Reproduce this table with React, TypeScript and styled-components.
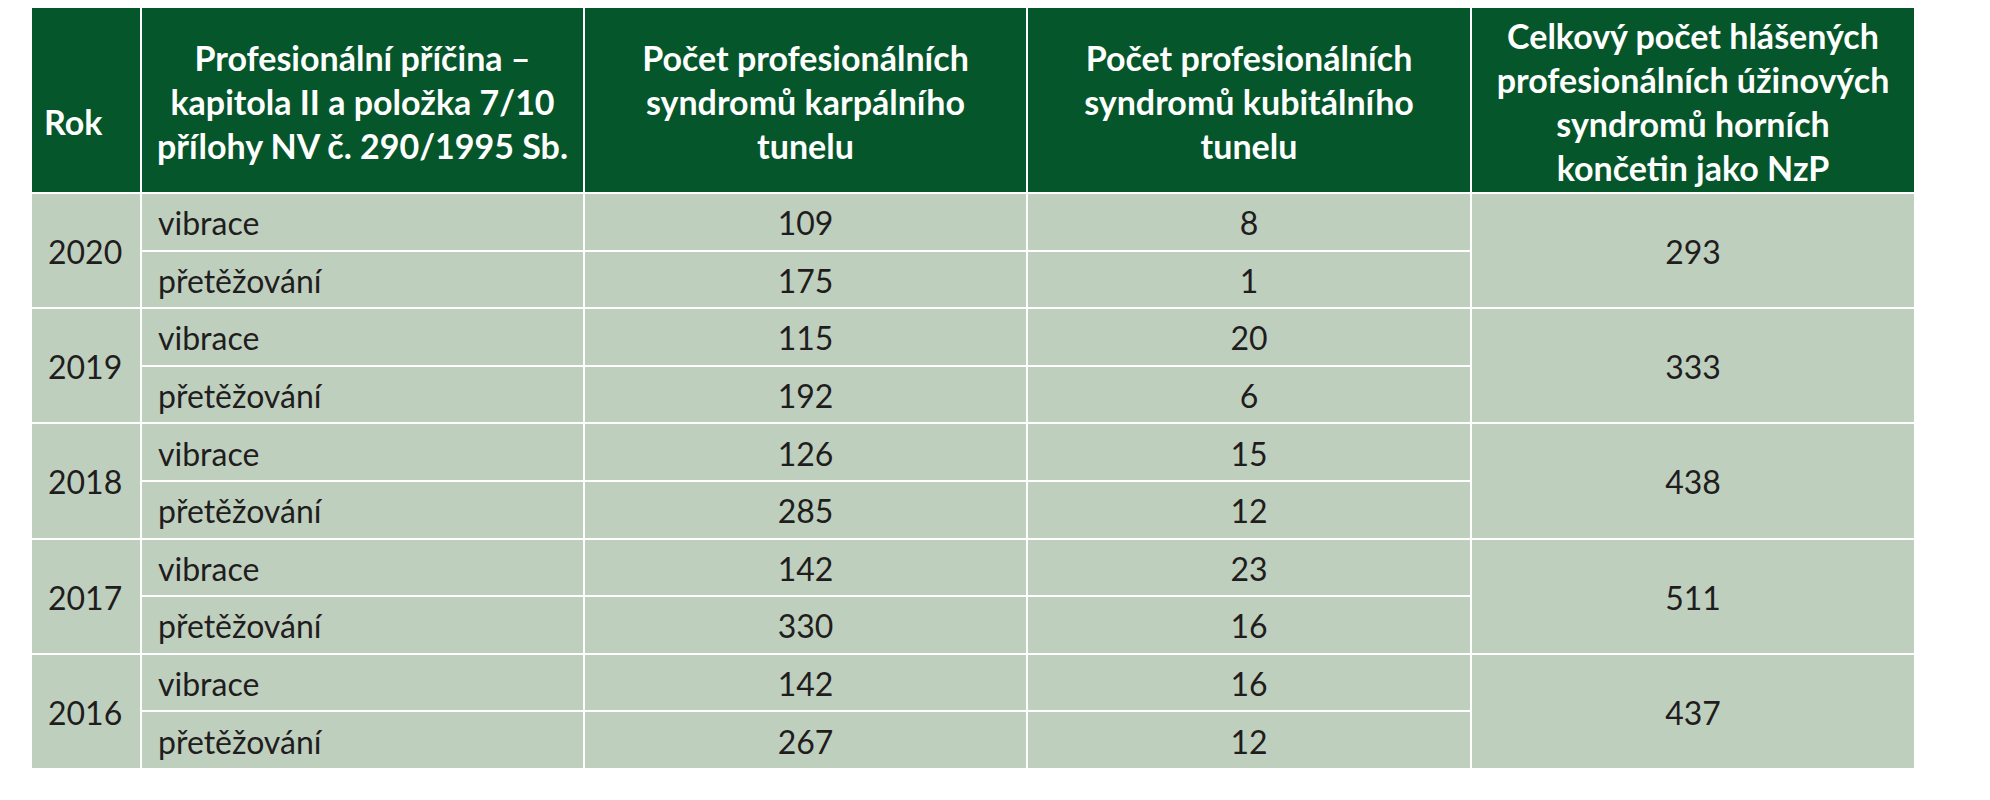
import React from "react";
import styled, { createGlobalStyle } from "styled-components";

const Global = createGlobalStyle`
  html, body { margin: 0; padding: 0; background: #ffffff; }
  body { font-family: "Lato", "Open Sans", sans-serif; }
`;

const Page = styled.div`
  width: 1990px;
  height: 800px;
  padding: 6px 0 0 30px;
  box-sizing: border-box;
  background: #ffffff;
`;

const Table = styled.table`
  border-collapse: collapse;
  width: 1884px;
  table-layout: fixed;
`;

const HeadCell = styled.th<{ $align?: "left" | "center" }>`
  background: #05562a;
  color: #ffffff;
  font-family: "Lato", sans-serif;
  font-weight: 700;
  font-size: 34px;
  line-height: 44px;
  text-align: ${(p) => p.$align ?? "center"};
  padding: ${(p) => (p.$align === "left" ? "44px 0 0 12px" : "4px 6px 0")};
  height: 186px;
  border: 2px solid #ffffff;
  box-sizing: border-box;
  vertical-align: middle;
`;

const Cell = styled.td<{ $align?: "left" | "center" }>`
  background: #bfcfbe;
  color: #1f1d1d;
  font-family: "Lato", sans-serif;
  font-size: 32px;
  font-weight: 400;
  height: 57.6px;
  padding: ${(p) => (p.$align === "left" ? "2px 0 0 16px" : "2px 0 0")};
  text-align: ${(p) => p.$align ?? "center"};
  border: 2px solid #ffffff;
  box-sizing: border-box;
  vertical-align: middle;
`;

type Row = {
  year: string;
  vib: [string, string];
  over: [string, string];
  total: string;
};

const rows: Row[] = [
  { year: "2020", vib: ["109", "8"], over: ["175", "1"], total: "293" },
  { year: "2019", vib: ["115", "20"], over: ["192", "6"], total: "333" },
  { year: "2018", vib: ["126", "15"], over: ["285", "12"], total: "438" },
  { year: "2017", vib: ["142", "23"], over: ["330", "16"], total: "511" },
  { year: "2016", vib: ["142", "16"], over: ["267", "12"], total: "437" },
];

export default function App() {
  return (
    <>
      <Global />
      <Page>
        <Table>
          <colgroup>
            <col style={{ width: 110 }} />
            <col style={{ width: 443 }} />
            <col style={{ width: 443 }} />
            <col style={{ width: 444 }} />
            <col style={{ width: 444 }} />
          </colgroup>
          <thead>
            <tr>
              <HeadCell $align="left">Rok</HeadCell>
              <HeadCell>
                Profesionální příčina –<br />
                kapitola II a položka 7/10<br />
                přílohy NV č. 290/1995 Sb.
              </HeadCell>
              <HeadCell>
                Počet profesionálních<br />
                syndromů karpálního<br />
                tunelu
              </HeadCell>
              <HeadCell>
                Počet profesionálních<br />
                syndromů kubitálního<br />
                tunelu
              </HeadCell>
              <HeadCell>
                Celkový počet hlášených<br />
                profesionálních úžinových<br />
                syndromů horních<br />
                končetin jako NzP
              </HeadCell>
            </tr>
          </thead>
          <tbody>
            {rows.map((r) => (
              <React.Fragment key={r.year}>
                <tr>
                  <Cell $align="left" rowSpan={2}>
                    {r.year}
                  </Cell>
                  <Cell $align="left">vibrace</Cell>
                  <Cell>{r.vib[0]}</Cell>
                  <Cell>{r.vib[1]}</Cell>
                  <Cell rowSpan={2}>{r.total}</Cell>
                </tr>
                <tr>
                  <Cell $align="left">přetěžování</Cell>
                  <Cell>{r.over[0]}</Cell>
                  <Cell>{r.over[1]}</Cell>
                </tr>
              </React.Fragment>
            ))}
          </tbody>
        </Table>
      </Page>
    </>
  );
}
